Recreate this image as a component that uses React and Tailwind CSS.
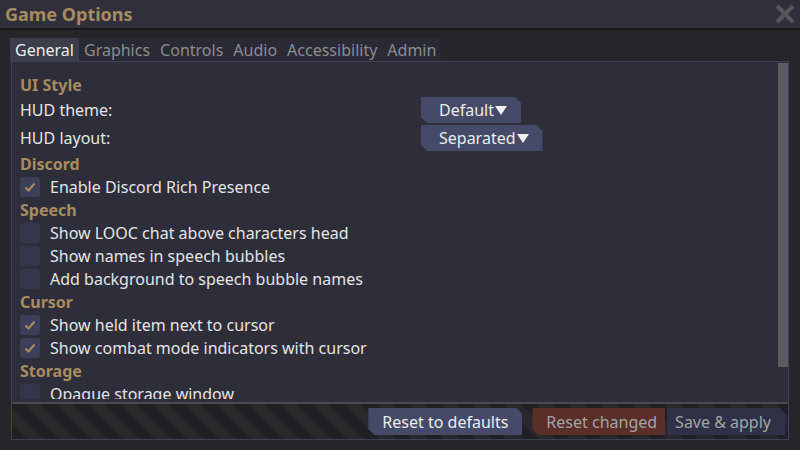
import React from "react";

const chamfer = "[clip-path:polygon(0_0,calc(100%_-_6px)_0,100%_6px,100%_100%,6px_100%,0_calc(100%_-_6px))]";

function Heading({ children }) {
  return <div className="h-[23px] flex items-center text-[16px] font-bold text-[#a88b5e] leading-none">{children}</div>;
}

function Check({ checked, label }) {
  return (
    <div className="h-[23px] flex items-center gap-[10px]">
      <div className={"w-[20px] h-[20px] rounded-[3px] flex items-center justify-center " + (checked ? "bg-[#3c3f57]" : "bg-[#34374b]")}>
        {checked && (
          <svg width="14" height="14" viewBox="0 0 14 14">
            <polyline points="2.5,7.5 5.5,10.5 11.5,3.5" fill="none" stroke="#a88b5e" strokeWidth="2" />
          </svg>
        )}
      </div>
      <span className="text-[16px] text-[#e4e4e4] leading-none">{label}</span>
    </div>
  );
}

function Dropdown({ label, value }) {
  return (
    <div className="h-[28px] flex items-center">
      <div className="w-[401px] text-[16px] text-[#e4e4e4]">{label}</div>
      <div className={"h-[26px] flex items-center pl-[18px] pr-[14px] bg-[#454a69] text-[16px] text-[#ececec] " + chamfer}>
        {value}
        <svg width="12" height="9" viewBox="0 0 12 9" className="ml-[1px]">
          <polygon points="0,0 12,0 6,9" fill="#f0f0f0" />
        </svg>
      </div>
    </div>
  );
}

export default function App() {
  const tabs = ["General", "Graphics", "Controls", "Audio", "Accessibility", "Admin"];
  return (
    <div className="w-[800px] h-[450px] bg-[#25252a] font-['Noto_Sans',sans-serif] overflow-hidden">
      <div className="h-[28px] bg-[#30303c] flex items-center justify-between pl-[5px] pr-[4px]">
        <span className="text-[18px] font-bold text-[#a88b5e] leading-none">Game Options</span>
        <svg width="22" height="22" viewBox="0 0 22 22">
          <path d="M3 3L19 19M19 3L3 19" stroke="#55555a" strokeWidth="4" />
        </svg>
      </div>
      <div className="h-[2px] bg-[#19191d]" />
      <div className="pt-[8px] pl-[10px] pr-[11px]">
        <div className="flex h-[23px]">
          {tabs.map((t, i) => (
            <div
              key={t}
              className={
                "px-[5px] flex items-center text-[16px] leading-none " +
                (i === 0 ? "bg-[#3c3d4a] text-[#ececec]" : "bg-[#292a33] text-[#8c8c90]")
              }
            >
              {t}
            </div>
          ))}
        </div>
        <div className="ml-px h-[379px] border border-[#3d4059] bg-[#2e2e3a] flex flex-col">
          <div className="relative h-[337px] overflow-hidden pt-[11px] pl-[8px]">
            <Heading>UI Style</Heading>
            <Dropdown label="HUD theme:" value="Default" />
            <Dropdown label="HUD layout:" value="Separated" />
            <Heading>Discord</Heading>
            <Check checked label="Enable Discord Rich Presence" />
            <Heading>Speech</Heading>
            <Check label="Show LOOC chat above characters head" />
            <Check label="Show names in speech bubbles" />
            <Check label="Add background to speech bubble names" />
            <Heading>Cursor</Heading>
            <Check checked label="Show held item next to cursor" />
            <Check checked label="Show combat mode indicators with cursor" />
            <Heading>Storage</Heading>
            <Check label="Opaque storage window" />
            <div className="absolute right-0 top-[1px] w-[10px] h-[304px] bg-[#5a5a5f]" />
          </div>
          <div className="h-[3px]" />
          <div className="h-[2px] bg-[#4a4a4f]" />
          <div className="h-[35px] flex items-start justify-end pt-[4px] pr-[3px] bg-[repeating-linear-gradient(45deg,#1f1f24_0px,#1f1f24_11px,#29292c_11px,#29292c_22.6px)]">
            <div className={"h-[27px] flex items-center pl-[14px] pr-[14px] bg-[#454a69] text-[16px] text-[#ececec] " + chamfer}>
              Reset to defaults
            </div>
            <div className="w-[10px]" />
            <div className="h-[27px] flex items-center pl-[14px] pr-[8px] bg-[#5a2e29] text-[16px] text-[#a4a4a4] [clip-path:polygon(0_0,100%_0,100%_100%,6px_100%,0_calc(100%_-_6px))]">
              Reset changed
            </div>
            <div className="w-[2px]" />
            <div className="h-[27px] flex items-center pl-[8px] pr-[14px] bg-[#2f3246] text-[16px] text-[#a4a4a4] [clip-path:polygon(0_0,calc(100%_-_6px)_0,100%_6px,100%_100%,0_100%)]">
              Save &amp; apply
            </div>
          </div>
        </div>
      </div>
    </div>
  );
}
